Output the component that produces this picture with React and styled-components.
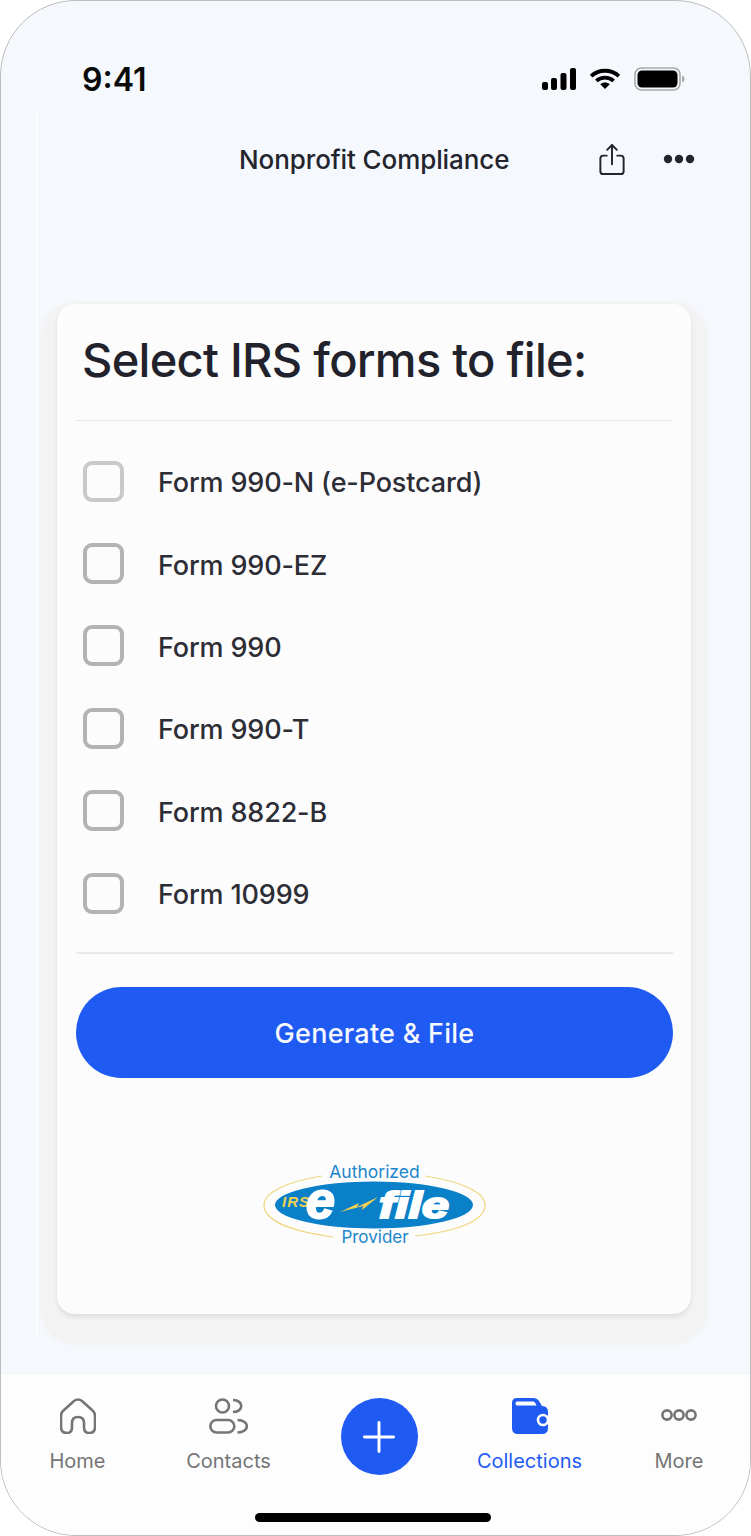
import React from 'react';
import styled, { createGlobalStyle } from 'styled-components';
import { Plus } from 'lucide-react';

const GlobalStyle = createGlobalStyle`
  html, body {
    margin: 0;
    padding: 0;
    background: #ffffff;
  }
  body {
    font-family: Inter, "Noto Sans", sans-serif;
  }
`;

const Phone = styled.div`
  box-sizing: border-box;
  width: 751px;
  height: 1536px;
  display: flex;
  flex-direction: column;
  position: relative;
  overflow: hidden;
  background: #f5f8fd;
  border: 1px solid #bdbdbd;
  border-radius: 76px;
`;

const StatusBar = styled.div`
  height: 109px;
  flex: none;
  box-sizing: border-box;
  padding: 60px 65px 0 81px;
  display: flex;
  justify-content: space-between;
  align-items: flex-start;
`;

const Time = styled.span`
  font-size: 32px;
  line-height: 38px;
  font-weight: 600;
  color: #0a0a0a;
`;

const StatusIcons = styled.div`
  display: flex;
  align-items: center;
  gap: 13px;
  margin-top: 6px;
`;

const Body = styled.div`
  flex: 1;
  min-height: 0;
  margin-left: 35px;
  border-left: 2px solid #fbfcfe;
  margin-bottom: 34px;
  display: flex;
  flex-direction: column;
`;

const Header = styled.header`
  height: 101px;
  flex: none;
  position: relative;
  display: flex;
  align-items: center;
  justify-content: flex-end;
  gap: 38px;
  padding: 0 55px 0 0;
  box-sizing: border-box;
`;

const Title = styled.h1`
  position: absolute;
  left: 201px;
  top: 32px;
  margin: 0;
  font-size: 26px;
  line-height: 36px;
  font-weight: 500;
  letter-spacing: -0.1px;
  color: #23242d;
`;

const ShareIcon = styled.svg`
  display: block;
  margin-bottom: 3px;
  color: #23242d;
`;

const DotsIcon = styled.svg`
  display: block;
  margin-bottom: 3px;
  color: #23242d;
`;

const Card = styled.main`
  box-sizing: border-box;
  margin: 93px 0 0 19px;
  width: 634px;
  height: 1010px;
  display: flex;
  flex-direction: column;
  padding: 0 18px 0 19px;
  background: #fcfcfd;
  border-radius: 18px;
  box-shadow: 0 3px 4px rgba(40, 40, 50, 0.1), 0 14px 3px 17px #f3f3f4;
`;

const Heading = styled.h2`
  margin: 0;
  padding: 26px 0 0 6px;
  height: 117px;
  box-sizing: border-box;
  font-size: 47px;
  line-height: 60px;
  font-weight: 500;
  letter-spacing: -0.72px;
  color: #21222c;
  border-bottom: 1px solid #e6e7e9;
`;

const FormList = styled.ul`
  list-style: none;
  margin: 0;
  padding: 19px 0 18px 7px;
  border-bottom: 2px solid #e8e9eb;
`;

const FormRow = styled.li`
  height: 82.4px;
  display: flex;
  align-items: center;
  gap: 34px;
`;

const Checkbox = styled.span`
  box-sizing: border-box;
  width: 41px;
  height: 41px;
  flex: none;
  background: #fcfcfd;
  border: 4px solid ${p => (p.$faint ? '#c9c9c9' : '#b3b3b3')};
  border-radius: 9px;
`;

const FormName = styled.span`
  margin-top: 3px;
  font-size: 27px;
  font-weight: 500;
  letter-spacing: -0.15px;
  color: #2c2d35;
`;

const FileButton = styled.button`
  margin-top: 33px;
  padding: 2px 0 0;
  height: 91px;
  flex: none;
  border: none;
  border-radius: 46px;
  background: #1f5bf2;
  color: #f6f8ff;
  font-family: inherit;
  font-size: 27px;
  font-weight: 500;
  letter-spacing: 0.25px;
`;

const LogoWrap = styled.div`
  margin-top: 81px;
  display: flex;
  justify-content: center;
`;

const TabBar = styled.nav`
  position: relative;
  height: 162px;
  flex: none;
  box-sizing: border-box;
  background: #fdfdfe;
  border-top: 1px solid #f1f2f4;
  display: grid;
  grid-template-columns: 153px 149px 152px 149px 150px;
  padding-top: 24px;
`;

const Tab = styled.div`
  display: flex;
  flex-direction: column;
  align-items: center;
  height: 75px;
  color: ${p => (p.$active ? '#1f5bf2' : '#757575')};
`;

const TabIcon = styled.svg`
  display: block;
  flex: none;
`;

const TabLabel = styled.span`
  margin-top: auto;
  font-size: 20px;
  line-height: 24px;
  font-weight: 400;
`;

const AddSlot = styled.div`
  display: flex;
  justify-content: center;
`;

const AddButton = styled.div`
  width: 77px;
  height: 77px;
  border-radius: 50%;
  background: #1f5bf2;
  color: #ffffff;
  display: flex;
  align-items: center;
  justify-content: center;
`;

const HomeBar = styled.div`
  position: absolute;
  left: 254px;
  bottom: 13px;
  width: 236px;
  height: 9px;
  border-radius: 5px;
  background: #000000;
`;

const forms = [
  'Form 990-N (e-Postcard)',
  'Form 990-EZ',
  'Form 990',
  'Form 990-T',
  'Form 8822-B',
  'Form 10999',
];

function SignalIcon() {
  return (
    <svg width="34" height="22" viewBox="0 0 34 22" fill="#000">
      <rect x="0" y="14" width="6" height="8" rx="2" />
      <rect x="9" y="10" width="6" height="12" rx="2" />
      <rect x="18.5" y="5" width="6" height="17" rx="2" />
      <rect x="28" y="0" width="6" height="22" rx="2" />
    </svg>
  );
}

function WifiIcon() {
  return (
    <svg width="32" height="22" viewBox="0 0 33 23" fill="none" stroke="#000" strokeWidth="4">
      <path d="M2 8.5 C10 1 23 1 31 8.5" />
      <path d="M7.5 13.5 C12.5 9 20.5 9 25.5 13.5" />
      <path d="M11.5 17 L16.5 22 L21.5 17 C18.5 14.5 14.5 14.5 11.5 17 Z" fill="#000" stroke="none" />
    </svg>
  );
}

function BatteryIcon() {
  return (
    <svg width="51" height="24" viewBox="0 0 51 24">
      <rect x="1" y="1" width="45" height="22" rx="6.5" fill="none" stroke="#a9a9a9" strokeWidth="1.6" />
      <rect x="3.5" y="3.5" width="40" height="17" rx="4.5" fill="#000" />
      <path d="M48 8.5 C50 9.5 50.5 10.5 50.5 12 C50.5 13.5 50 14.5 48 15.5 Z" fill="#a9a9a9" />
    </svg>
  );
}

function EfileLogo() {
  const heavy = { fontFamily: 'Liberation Sans, sans-serif', fontWeight: 700, fontStyle: 'italic' };
  return (
    <svg width="224" height="88" viewBox="0 -4 224 88">
      <path d="M59 13 C22 19 1 30 1 42 C1 57 26 68 70 74" fill="none" stroke="#f0d77e" strokeWidth="1.2" />
      <path d="M162 13 C201 19 222 30 222 42 C222 57 197 68 152 73" fill="none" stroke="#f0d77e" strokeWidth="1.2" />
      <ellipse cx="111" cy="42" rx="99" ry="23.5" fill="#0a80c8" />
      <text x="111.5" y="15" textAnchor="middle" fontFamily="Inter, sans-serif" fontSize="17.5" fill="#1b86cc">Authorized</text>
      <text x="112" y="80" textAnchor="middle" fontFamily="Inter, sans-serif" fontSize="17" fill="#1b86cc">Provider</text>
      <text x="19" y="44" fontSize="15" textLength="27" fill="#f2d152" {...heavy}>IRS</text>
      <text x="43" y="55" fontSize="52" fill="#fff" stroke="#fff" strokeWidth="2" {...heavy}>e</text>
      <polygon points="77,49 96,40 94,44 115,34 99,47 100,43" fill="#f2d152" />
      <text x="116" y="55" fontSize="36" textLength="70" lengthAdjust="spacingAndGlyphs" fill="#fff" stroke="#fff" strokeWidth="2" {...heavy}>file</text>
    </svg>
  );
}

export default function App() {
  return (
    <>
      <GlobalStyle />
      <Phone>
        <StatusBar>
          <Time>9:41</Time>
          <StatusIcons>
            <SignalIcon />
            <WifiIcon />
            <BatteryIcon />
          </StatusIcons>
        </StatusBar>
        <Body>
          <Header>
            <Title>Nonprofit Compliance</Title>
            <ShareIcon width="26" height="31" viewBox="0 0 26 32" fill="none" stroke="currentColor" strokeWidth="2" strokeLinecap="round" strokeLinejoin="round">
              <path d="M7.5 12 H4 a3 3 0 0 0 -3 3 v13 a3 3 0 0 0 3 3 h18 a3 3 0 0 0 3 -3 v-13 a3 3 0 0 0 -3 -3 h-3.5" />
              <path d="M13 21 V1.5" />
              <path d="M8 6 L13 1 L18 6" />
            </ShareIcon>
            <DotsIcon width="32" height="10" viewBox="0 0 32 10" fill="currentColor">
              <circle cx="5" cy="5" r="4.2" />
              <circle cx="16" cy="5" r="4.2" />
              <circle cx="27" cy="5" r="4.2" />
            </DotsIcon>
          </Header>
          <Card>
            <Heading>Select IRS forms to file:</Heading>
            <FormList>
              {forms.map((name, i) => (
                <FormRow key={name}>
                  <Checkbox $faint={i === 0} />
                  <FormName>{name}</FormName>
                </FormRow>
              ))}
            </FormList>
            <FileButton>Generate &amp; File</FileButton>
            <LogoWrap>
              <EfileLogo />
            </LogoWrap>
          </Card>
        </Body>
        <TabBar>
          <Tab>
            <TabIcon width="36" height="36" viewBox="0 0 36 36" fill="none" stroke="currentColor" strokeWidth="2.6">
              <path d="M4 12 L14 3 Q18 0 22 3 L32 12 Q35 14 35 18 V29 Q35 35 29 35 Q24 35 24 29 V25 Q24 19 18 19 Q12 19 12 25 V29 Q12 35 7 35 Q1 35 1 29 V18 Q1 14 4 12 Z" />
            </TabIcon>
            <TabLabel>Home</TabLabel>
          </Tab>
          <Tab>
            <TabIcon width="39" height="36" viewBox="0 0 39 36" fill="none" stroke="currentColor" strokeWidth="2.6">
              <circle cx="13.5" cy="8" r="6.5" />
              <path d="M24 2 C35 2 35 14 24 14" />
              <rect x="1.3" y="22" width="24" height="12.5" rx="6.25" />
              <path d="M28.5 22 C41 22 41 34.5 28.5 34.5" />
            </TabIcon>
            <TabLabel>Contacts</TabLabel>
          </Tab>
          <AddSlot>
            <AddButton>
              <Plus size={50} strokeWidth={1.4} />
            </AddButton>
          </AddSlot>
          <Tab $active>
            <TabIcon width="36" height="36" viewBox="0 0 36 36">
              <path fill="currentColor" d="M5 0 H21 Q25 0 27 3 L30 8 H30 Q36 8 36 14 V30 Q36 36 30 36 H6 Q0 36 0 30 V5 Q0 0 5 0 Z" />
              <path fill="#fdfdfe" d="M5 3.5 H21 Q23 3.5 24.5 7.5 H5 Q3.5 7.5 3.5 5.5 Q3.5 3.5 5 3.5 Z" />
              <circle cx="31" cy="22" r="5" fill="currentColor" stroke="#fdfdfe" strokeWidth="2.6" />
            </TabIcon>
            <TabLabel>Collections</TabLabel>
          </Tab>
          <Tab>
            <TabIcon width="36" height="36" viewBox="0 0 36 36" fill="none" stroke="currentColor" strokeWidth="2.6">
              <circle cx="6" cy="17" r="4.6" />
              <circle cx="18" cy="17" r="4.6" />
              <circle cx="30" cy="17" r="4.6" />
            </TabIcon>
            <TabLabel>More</TabLabel>
          </Tab>
          <HomeBar />
        </TabBar>
      </Phone>
    </>
  );
}
